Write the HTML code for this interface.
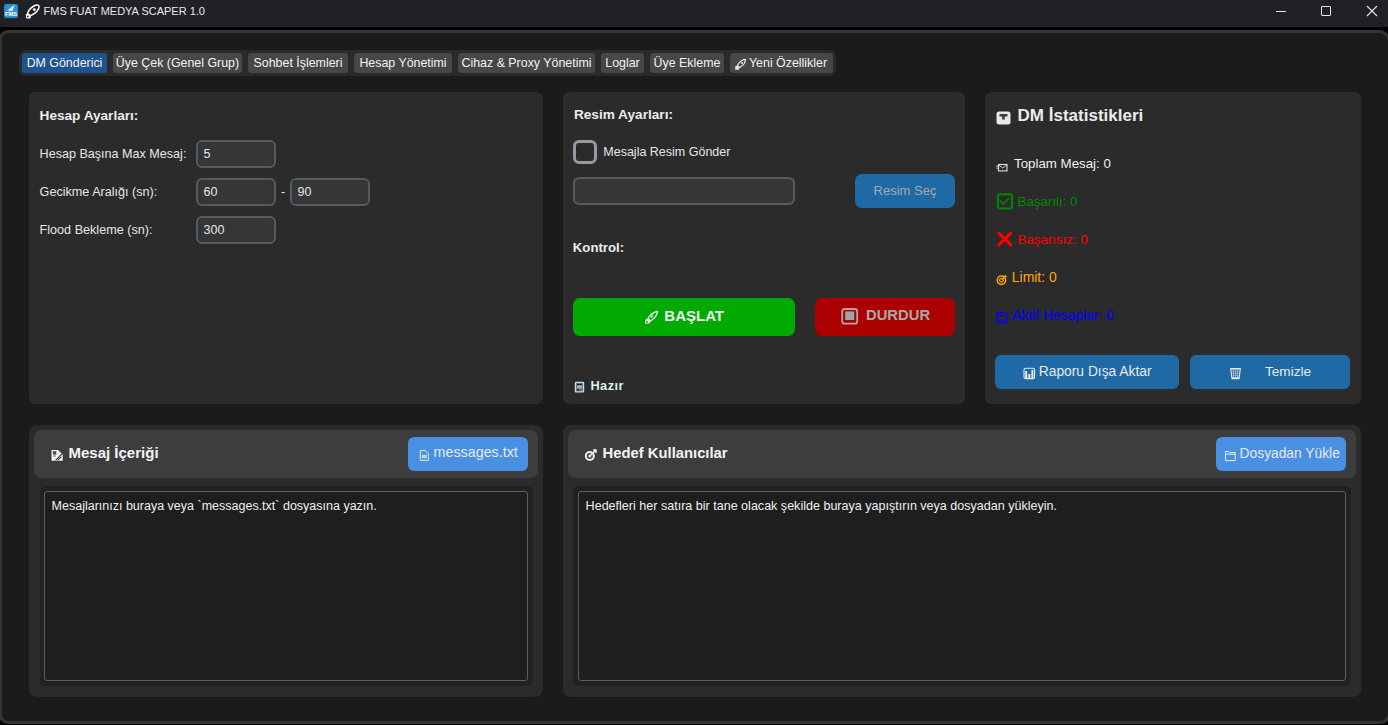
<!DOCTYPE html>
<html><head><meta charset="utf-8"><style>
html,body{margin:0;padding:0;width:1388px;height:725px;overflow:hidden;background:#000;}
body{position:relative;font-family:"Liberation Sans",sans-serif;}
body>div,body>svg{position:absolute;box-sizing:border-box;}
.t{white-space:nowrap;}
.tab{display:flex;align-items:center;justify-content:center;color:#f2f2f2;font-size:12.4px;border-radius:3px;white-space:nowrap;}
.tab .ic{display:inline-block;width:13px;}
.btn{display:flex;align-items:center;justify-content:center;border-radius:7px;white-space:nowrap;}
</style></head><body>
<div style="left:0px;top:0px;width:1388px;height:27px;background:#202124;"></div>
<div style="left:0px;top:27px;width:1388px;height:3px;background:#000;"></div>
<div style="left:-1.5px;top:30px;width:1392.5px;height:693.5px;background:#1b1b1b;border:3px solid #343434;border-radius:9px 12px 11px 9px;"></div>
<div style="left:0px;top:723.5px;width:1388px;height:1.5px;background:#000;"></div>
<svg style="left:3px;top:3px;width:16px;height:16px" viewBox="0 0 16 16"><rect x="0.6" y="0.6" width="14.8" height="14.8" rx="2.5" fill="#2a8fd4" stroke="#1e1614" stroke-width="0.8"/><path d="M4 7.8 L11.5 1.8 L9.3 8.6 L7.5 7.6 L6.6 9.2 L6.4 7.4Z" fill="#f2eeea"/><text x="8" y="12.8" font-size="5.8" font-family="Liberation Sans" font-weight="bold" fill="#fff" text-anchor="middle">FMS</text></svg>
<svg style="left:22px;top:2px;width:20px;height:20px" viewBox="0 0 20 20"><ellipse cx="11.3" cy="8.3" rx="7.2" ry="3.2" transform="rotate(-42 11.3 8.3)" fill="none" stroke="#fff" stroke-width="1.5"/><circle cx="12.3" cy="7.6" r="1.4" fill="#fff"/><path d="M3.8 12.2 L6.3 11 L9.2 13.8 L8.2 16.4 L4.2 16.6Z" fill="#fff"/><circle cx="5.8" cy="14.4" r="0.9" fill="#202124"/></svg>
<div class="t" style="left:43.60px;top:6.29px;font-size:11px;line-height:11px;color:#e8e8e8;">FMS FUAT MEDYA SCAPER 1.0</div>
<div style="left:1276px;top:11px;width:10px;height:1px;background:#e6e6e6;"></div>
<div style="left:1321px;top:6px;width:10px;height:10px;border:1px solid #e6e6e6;border-radius:1px;"></div>
<svg style="left:1366px;top:5px;width:12px;height:12px" viewBox="0 0 12 12"><path d="M1 1 L11 11 M11 1 L1 11" stroke="#e6e6e6" stroke-width="1.1"/></svg>
<div style="left:19px;top:50px;width:817px;height:26px;background:#2a2a2a;border-radius:6px;"></div>
<div class="tab" style="left:22px;top:53px;width:85px;height:20px;background:#1f538d;">DM Gönderici</div>
<div class="tab" style="left:113px;top:53px;width:129px;height:20px;background:#474747;">Üye Çek (Genel Grup)</div>
<div class="tab" style="left:248px;top:53px;width:100px;height:20px;background:#474747;">Sohbet İşlemleri</div>
<div class="tab" style="left:354px;top:53px;width:98px;height:20px;background:#474747;">Hesap Yönetimi</div>
<div class="tab" style="left:458px;top:53px;width:137px;height:20px;background:#474747;">Cihaz &amp; Proxy Yönetimi</div>
<div class="tab" style="left:601px;top:53px;width:43px;height:20px;background:#474747;">Loglar</div>
<div class="tab" style="left:650px;top:53px;width:74px;height:20px;background:#474747;">Üye Ekleme</div>
<div class="tab" style="left:730px;top:53px;width:103px;height:20px;background:#474747;"><span class="ic"></span>Yeni Özellikler</div>
<svg style="left:734px;top:58px;width:13px;height:13px" viewBox="0 0 13 13"><path d="M11.5 1.3 C8.5 1.5 5.3 4 3.5 7.3 L5.7 9.5 C9 7.7 11.5 4.5 11.5 1.3Z" fill="none" stroke="#e6e6e6" stroke-width="1.2"/><path d="M3.3 7.5 L1.3 8.3 L1.2 11.8 L4.7 11.7 L5.5 9.7Z" fill="#e6e6e6"/><circle cx="8" cy="5" r="1" fill="#e6e6e6"/></svg>
<div style="left:29px;top:92px;width:514px;height:312px;background:#2b2b2b;border-radius:6px;"></div>
<div class="t" style="left:39.60px;top:108.98px;font-size:13.6px;line-height:13.6px;color:#ececec;font-weight:bold;">Hesap Ayarları:</div>
<div class="t" style="left:39.60px;top:147.75px;font-size:12.58px;line-height:12.58px;color:#e6e6e6;">Hesap Başına Max Mesaj:</div>
<div class="t" style="left:39.60px;top:185.71px;font-size:12.62px;line-height:12.62px;color:#e6e6e6;">Gecikme Aralığı (sn):</div>
<div class="t" style="left:39.60px;top:223.51px;font-size:12.62px;line-height:12.62px;color:#e6e6e6;">Flood Bekleme (sn):</div>
<div style="left:196px;top:140px;width:80px;height:28px;background:#343638;border:2px solid #565b5e;border-radius:6px;"></div>
<div class="t" style="left:203.50px;top:148.42px;font-size:12.5px;line-height:12.5px;color:#e6e6e6;">5</div>
<div style="left:196px;top:178px;width:80px;height:28px;background:#343638;border:2px solid #565b5e;border-radius:6px;"></div>
<div class="t" style="left:203.50px;top:186.42px;font-size:12.5px;line-height:12.5px;color:#e6e6e6;">60</div>
<div style="left:290px;top:178px;width:80px;height:28px;background:#343638;border:2px solid #565b5e;border-radius:6px;"></div>
<div class="t" style="left:297.50px;top:186.42px;font-size:12.5px;line-height:12.5px;color:#e6e6e6;">90</div>
<div style="left:196px;top:216px;width:80px;height:28px;background:#343638;border:2px solid #565b5e;border-radius:6px;"></div>
<div class="t" style="left:203.50px;top:224.42px;font-size:12.5px;line-height:12.5px;color:#e6e6e6;">300</div>
<div class="t" style="left:281.00px;top:186.42px;font-size:12.5px;line-height:12.5px;color:#e6e6e6;">-</div>
<div style="left:563px;top:92px;width:402px;height:312px;background:#2b2b2b;border-radius:6px;"></div>
<div class="t" style="left:573.90px;top:108.44px;font-size:13.65px;line-height:13.65px;color:#ececec;font-weight:bold;">Resim Ayarları:</div>
<div style="left:573px;top:140px;width:24px;height:24px;border:3px solid #949a9f;border-radius:6px;"></div>
<div class="t" style="left:603.30px;top:146.42px;font-size:12.5px;line-height:12.5px;color:#e6e6e6;">Mesajla Resim Gönder</div>
<div style="left:573px;top:177px;width:222px;height:28px;background:#343638;border:2px solid #565b5e;border-radius:6px;"></div>
<div class="btn" style="left:855px;top:174px;width:100px;height:34px;background:#1f6aa5;color:#a9a9a9;font-size:13px;padding-bottom:2px;">Resim Seç</div>
<div class="t" style="left:572.80px;top:240.52px;font-size:13.2px;line-height:13.2px;color:#ececec;font-weight:bold;">Kontrol:</div>
<div style="left:573px;top:298px;width:222px;height:38px;background:#00aa00;border-radius:7px;"></div>
<svg style="left:643px;top:310px;width:16px;height:16px" viewBox="0 0 16 16"><path d="M14.5 1.5 C11 1.8 7.5 4.5 5 8.5 L7.5 11 C11.5 8.5 14.2 5 14.5 1.5Z" fill="none" stroke="#eaeaf0" stroke-width="1.4"/><path d="M10 5 L8 8" stroke="#eaeaf0" stroke-width="1.2"/><path d="M4.8 8.6 L2.4 9.4 L2 13.8 L6.4 13.6 L7.4 11.2Z" fill="#eaeaf0"/><circle cx="4" cy="12" r="0.9" fill="#00aa00"/></svg>
<div class="t" style="left:664.30px;top:308.30px;font-size:15px;line-height:15px;color:#f0f0f0;font-weight:bold;">BAŞLAT</div>
<div style="left:815px;top:298px;width:140px;height:38px;background:#ac0000;border-radius:7px;"></div>
<svg style="left:840px;top:307px;width:19px;height:18px" viewBox="0 0 19 18"><rect x="2.2" y="2" width="15" height="14.7" rx="2.5" fill="none" stroke="#a9a9a9" stroke-width="1.8"/><rect x="5.2" y="4.4" width="9" height="8.6" fill="#a3a3a3"/></svg>
<div class="t" style="left:866.00px;top:308.47px;font-size:14.8px;line-height:14.8px;color:#a9a9a9;font-weight:bold;">DURDUR</div>
<svg style="left:574px;top:381px;width:11px;height:12px" viewBox="0 0 11 12"><rect x="1.4" y="1.4" width="8.2" height="9.4" rx="0.6" fill="#6d7a80" stroke="#c6dfe8" stroke-width="1.2"/><rect x="3" y="4.2" width="5" height="3.2" fill="#a2adb2"/><rect x="3" y="2.8" width="5" height="1.3" fill="#1e1e1e"/><rect x="3" y="8.2" width="2.2" height="1.4" fill="#1e1e1e"/><circle cx="7.3" cy="9" r="0.7" fill="#8a5a20"/></svg>
<div class="t" style="left:590.40px;top:379.76px;font-size:12.8px;line-height:12.8px;color:#dcecf6;font-weight:bold;letter-spacing:0.45px;">Hazır</div>
<div style="left:985px;top:92px;width:376px;height:312px;background:#2b2b2b;border-radius:6px;"></div>
<svg style="left:996px;top:110px;width:15px;height:15px" viewBox="0 0 15 15"><rect x="0.5" y="1.5" width="14" height="13" rx="2.5" fill="#e8e8ea"/><path d="M3.5 4 H11.5 V6.5 H8.8 V9.5 H6.2 V6.5 H3.5Z" fill="#3a3a3a"/></svg>
<div class="t" style="left:1017.60px;top:106.61px;font-size:17px;line-height:17px;color:#ececec;font-weight:bold;">DM İstatistikleri</div>
<svg style="left:995px;top:163px;width:13px;height:9px" viewBox="0 0 13 9"><rect x="3.5" y="1.5" width="8.5" height="6.4" fill="#2b2b2b" stroke="#e0e0e0" stroke-width="1.1"/><path d="M3.5 1.8 L7.75 5 L12 1.8" fill="none" stroke="#d8d8d8" stroke-width="1"/><path d="M1 3.2 H3 M1.5 5.2 H3" stroke="#c8c8d0" stroke-width="1"/></svg>
<div class="t" style="left:1014.00px;top:156.54px;font-size:13.3px;line-height:13.3px;color:#f0f0f0;">Toplam Mesaj: 0</div>
<svg style="left:996px;top:192px;width:18px;height:18px" viewBox="0 0 18 18"><rect x="2" y="2.2" width="14" height="14.2" rx="2" fill="none" stroke="#008800" stroke-width="2"/><path d="M4 8.5 L7.3 12 L13 6" fill="none" stroke="#008800" stroke-width="1.5"/></svg>
<div class="t" style="left:1017.60px;top:195.04px;font-size:13.3px;line-height:13.3px;color:#008a00;">Başarılı: 0</div>
<svg style="left:996px;top:231px;width:17px;height:16px" viewBox="0 0 17 16"><path d="M2.8 2.2 L14.8 13.8 M14.8 2.2 L2.8 13.8" stroke="#ff0000" stroke-width="3" stroke-linecap="round"/></svg>
<div class="t" style="left:1017.60px;top:232.84px;font-size:13.3px;line-height:13.3px;color:#ff0000;">Başarısız: 0</div>
<svg style="left:996px;top:273px;width:12px;height:13px" viewBox="0 0 12 13"><circle cx="5.4" cy="7.2" r="4.2" fill="none" stroke="#ffa500" stroke-width="1.5"/><circle cx="5.4" cy="7.2" r="1.9" fill="none" stroke="#ffa500" stroke-width="1.1"/><path d="M5.6 6.8 L9.8 2.8" stroke="#ffa500" stroke-width="1.4"/><path d="M8.5 1.3 L11.4 4.3 L9 4.6Z" fill="#ffa500"/></svg>
<div class="t" style="left:1011.80px;top:270.89px;font-size:13.95px;line-height:13.95px;color:#ffa500;">Limit: 0</div>
<svg style="left:995px;top:311px;width:13px;height:13px" viewBox="0 0 13 13"><rect x="1.7" y="1.5" width="10" height="10.6" rx="1" fill="none" stroke="#0000ff" stroke-width="1.3"/><path d="M4.3 5.2 Q6.5 3.2 8.8 5.2 M4.3 8.6 Q6.5 10.4 8.8 8.4" fill="none" stroke="#0000ff" stroke-width="1.3"/><path d="M3.8 3.6 L5.5 4.2 L4 6Z M9.3 10 L7.6 9.4 L9 7.6Z" fill="#0000ff"/></svg>
<div class="t" style="left:1012.30px;top:308.97px;font-size:13.85px;line-height:13.85px;color:#0000ff;">Aktif Hesaplar: 0</div>
<div style="left:995px;top:355px;width:184px;height:34px;background:#1f6aa5;border-radius:6px;"></div>
<svg style="left:1023px;top:367px;width:13px;height:13px" viewBox="0 0 13 13"><rect x="1" y="1.2" width="10.6" height="10.4" rx="1.5" fill="none" stroke="#e6ecf2" stroke-width="1.1"/><rect x="2.2" y="4" width="2" height="7" fill="#e6ecf2"/><rect x="5.3" y="7" width="2" height="4" fill="#e6ecf2"/><rect x="8.4" y="3" width="2" height="8" fill="#e6ecf2"/></svg>
<div class="t" style="left:1038.80px;top:364.82px;font-size:13.8px;line-height:13.8px;color:#e8e8e8;">Raporu Dışa Aktar</div>
<div style="left:1190px;top:355px;width:160px;height:34px;background:#1f6aa5;border-radius:6px;"></div>
<svg style="left:1229px;top:367px;width:13px;height:13px" viewBox="0 0 13 13"><rect x="1" y="1" width="11" height="1.6" fill="#e6ecf2"/><path d="M1.8 2.6 L3 11.6 H10 L11.2 2.6" fill="none" stroke="#e6ecf2" stroke-width="1.1"/><path d="M3 4.2 H10 M3.3 6.4 H9.7 M3.6 8.6 H9.4 M4.5 3.5 V10.5 M6.5 3.5 V10.5 M8.5 3.5 V10.5" stroke="#c8d6e6" stroke-width="0.6"/><rect x="3" y="10.2" width="7" height="1.4" fill="#e6ecf2"/></svg>
<div class="t" style="left:1265.00px;top:364.98px;font-size:13.6px;line-height:13.6px;color:#e8e8e8;">Temizle</div>
<div style="left:29px;top:425px;width:514px;height:272px;background:#2b2b2b;border-radius:8px;"></div>
<div style="left:34px;top:430px;width:504px;height:48px;background:#3d3d3d;border-radius:7px;"></div>
<svg style="left:50px;top:449px;width:14px;height:13px" viewBox="0 0 14 13"><path d="M1.5 0.9 H8.3 L12.7 5.2 V11.8 H1.5Z" fill="#f4f4f4"/><rect x="2.9" y="2.2" width="3.4" height="3.4" fill="#4a4a5a"/><rect x="2.9" y="6.2" width="3" height="1.6" fill="#9a9a9a"/><path d="M12.3 4.6 L5.6 11.3" stroke="#3d3d3d" stroke-width="1.2"/><path d="M11.2 7.8 L7.8 11.2" stroke="#3d3d3d" stroke-width="1.1"/><path d="M8.3 0.9 L12.7 5.2" stroke="#3d3d3d" stroke-width="0.6"/></svg>
<div class="t" style="left:68.50px;top:445.30px;font-size:15px;line-height:15px;color:#f4f4f4;font-weight:bold;">Mesaj İçeriği</div>
<div style="left:408px;top:437px;width:120px;height:34px;background:#4a90e2;border-radius:6px;"></div>
<svg style="left:419px;top:449px;width:11px;height:13px" viewBox="0 0 11 13"><path d="M1.3 1.6 H6.3 L9.4 4.6 V11.4 H1.3Z" fill="none" stroke="#e8e8f0" stroke-width="1"/><rect x="2.8" y="5.8" width="4.8" height="3.4" fill="#c8d4e8"/></svg>
<div class="t" style="left:433.60px;top:445.29px;font-size:14.3px;line-height:14.3px;color:#e8e8ee;">messages.txt</div>
<div style="left:39.5px;top:486px;width:493px;height:200px;background:#212121;border-radius:6px;"></div>
<div style="left:44px;top:491px;width:484px;height:190px;background:#1e1e1e;border:1px solid #5e5e5e;border-radius:3px;"></div>
<div class="t" style="left:51.60px;top:500.42px;font-size:12.5px;line-height:12.5px;color:#f0f0f0;">Mesajlarınızı buraya veya `messages.txt` dosyasına yazın.</div>
<div style="left:563px;top:425px;width:798px;height:272px;background:#2b2b2b;border-radius:8px;"></div>
<div style="left:568px;top:430px;width:788px;height:48px;background:#3d3d3d;border-radius:7px;"></div>
<svg style="left:584px;top:449px;width:13px;height:13px" viewBox="0 0 13 13"><circle cx="5.8" cy="7" r="5" fill="#f0f0f0"/><circle cx="5.8" cy="7" r="3" fill="#3d3d3d"/><circle cx="5.8" cy="7" r="1.5" fill="#f0f0f0"/><path d="M6 6.8 L11.5 1.5 M9 1 H12 V4" stroke="#f0f0f0" stroke-width="1.5" fill="none"/></svg>
<div class="t" style="left:602.60px;top:445.87px;font-size:14.8px;line-height:14.8px;color:#f4f4f4;font-weight:bold;">Hedef Kullanıcılar</div>
<div style="left:1216px;top:437px;width:130px;height:34px;background:#4a90e2;border-radius:6px;"></div>
<svg style="left:1224px;top:450px;width:12px;height:12px" viewBox="0 0 12 12"><path d="M1.5 1.5 H4.6 L5.6 2.6 H11.2 V10.6 H1.5Z M1.5 4.2 H11.2" fill="none" stroke="#e8e8f0" stroke-width="1"/></svg>
<div class="t" style="left:1239.60px;top:446.52px;font-size:13.8px;line-height:13.8px;color:#e8e8ee;">Dosyadan Yükle</div>
<div style="left:573px;top:486px;width:778px;height:200px;background:#212121;border-radius:6px;"></div>
<div style="left:578px;top:491px;width:768px;height:190px;background:#1e1e1e;border:1px solid #5e5e5e;border-radius:3px;"></div>
<div class="t" style="left:585.60px;top:500.37px;font-size:12.56px;line-height:12.56px;color:#f0f0f0;">Hedefleri her satıra bir tane olacak şekilde buraya yapıştırın veya dosyadan yükleyin.</div>
</body></html>
